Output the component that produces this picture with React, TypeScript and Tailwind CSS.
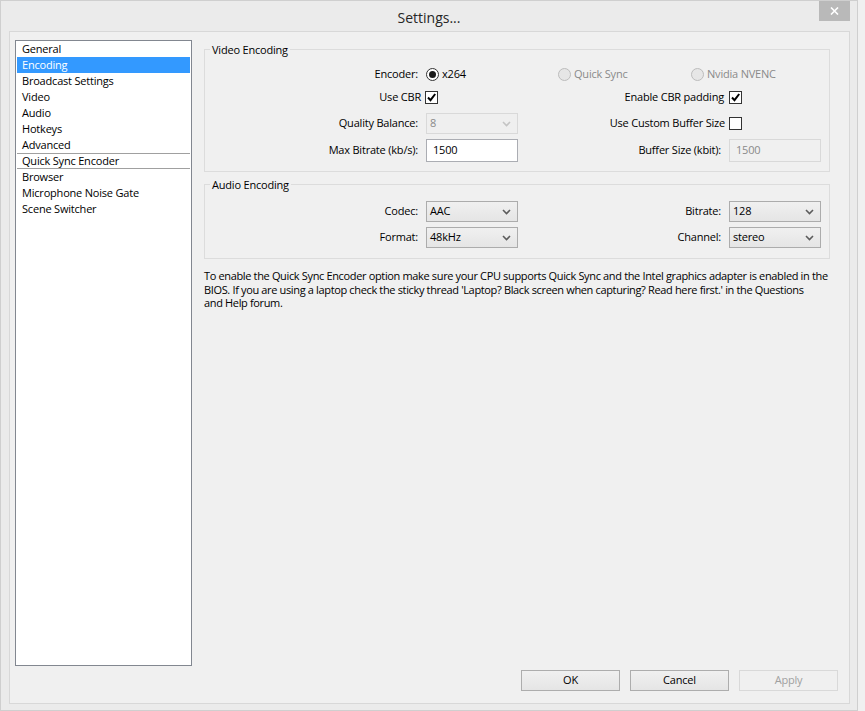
import type { ReactNode } from "react";

const sidebarGroups = [
  ["General", "Encoding", "Broadcast Settings", "Video", "Audio", "Hotkeys", "Advanced"],
  ["Quick Sync Encoder"],
  ["Browser", "Microphone Noise Gate", "Scene Switcher"],
];

const Chevron = ({ disabled }: { disabled?: boolean }) => (
  <svg width="9" height="6" viewBox="0 0 9 6" className="shrink-0">
    <path
      d="M1 1l3.5 3.5L8 1"
      fill="none"
      stroke={disabled ? "#c4c4c4" : "#5c5c5c"}
      strokeWidth="1.6"
    />
  </svg>
);

const Radio = ({ label, checked, disabled }: { label: string; checked?: boolean; disabled?: boolean }) => (
  <div className="flex items-center gap-[3px]">
    <span
      className={`w-[13px] h-[13px] rounded-full border flex items-center justify-center ${
        disabled ? "border-[#bcbcbc] bg-[#e6e6e6]" : "border-[#333333] bg-white"
      }`}
    >
      {checked && <span className="w-[7px] h-[7px] rounded-full bg-[#1a1a1a]" />}
    </span>
    <span className={disabled ? "text-[#8a8a8a]" : "text-black"}>{label}</span>
  </div>
);

const Checkbox = ({ checked }: { checked?: boolean }) => (
  <span className="w-[13px] h-[13px] border border-[#333333] bg-white flex items-center justify-center shrink-0">
    {checked && (
      <svg width="11" height="11" viewBox="0 0 11 11">
        <path d="M2 5.5l2.5 2.7L9.2 2" fill="none" stroke="#000" strokeWidth="2" />
      </svg>
    )}
  </span>
);

const Combo = ({ value, disabled }: { value: string; disabled?: boolean }) => (
  <div
    className={`w-[92px] h-[21px] border flex items-center justify-between pl-[3px] pr-[6px] ${
      disabled
        ? "border-[#d9d9d9] bg-[#efefef] text-[#8a8a8a]"
        : "border-[#acacac] bg-gradient-to-b from-[#f0f0f0] to-[#e5e5e5] text-black"
    }`}
  >
    <span>{value}</span>
    <Chevron disabled={disabled} />
  </div>
);

const TextBox = ({ value, disabled }: { value: string; disabled?: boolean }) => (
  <div
    className={`w-[92px] h-[23px] border flex items-center pl-[6px] ${
      disabled ? "border-[#d9d9d9] bg-[#f0f0f0] text-[#8a8a8a]" : "border-[#abadb3] bg-white text-black"
    }`}
  >
    {value}
  </div>
);

const Button = ({ children, disabled }: { children: ReactNode; disabled?: boolean }) => (
  <div
    className={`w-[99px] h-[21px] border flex items-center justify-center ${
      disabled
        ? "border-[#d9d9d9] bg-[#f0f0f0] text-[#a0a0a0]"
        : "border-[#adadad] bg-gradient-to-b from-[#f0f0f0] to-[#e5e5e5] text-black"
    }`}
  >
    {children}
  </div>
);

const GroupBox = ({ title, children, className = "" }: { title: string; children: ReactNode; className?: string }) => (
  <fieldset className={`border border-[#dcdcdc] ${className}`}>
    <legend className="ml-[5px] px-[2px] leading-[15px]">{title}</legend>
    {children}
  </fieldset>
);

export default function App() {
  return (
    <div className="w-[865px] h-[711px] bg-[#f0f0f0] font-['Open_Sans',sans-serif] text-[11px] tracking-[-0.2px] text-black">
      <div className="w-[858px] h-[711px] border border-[#cfcfcf] bg-[#ebebeb]">
        {/* title bar */}
        <div className="relative h-[30px] flex items-center justify-center pt-[2px]">
          <span className="text-[14px] text-[#262626] tracking-normal">Settings...</span>
          <div className="absolute top-0 right-[7px] w-[31px] h-[20px] bg-[#b9b9b9] flex items-center justify-center">
            <svg width="9" height="8" viewBox="0 0 9 8">
              <path d="M1 0.5l7 7M8 0.5l-7 7" stroke="#fff" strokeWidth="1.6" />
            </svg>
          </div>
        </div>

        <div className="ml-[8px] w-[841px] h-[673px] border border-[#d8d8d8] bg-[#f0f0f0] flex flex-col">
          <div className="flex pt-[8px] pl-[5px]">
            {/* section list */}
            <div className="w-[177px] h-[626px] border border-[#828790] bg-white px-[1px]">
              {sidebarGroups.map((group, gi) => (
                <div key={gi} className={gi > 0 ? "border-t border-[#a0a0a0]" : ""}>
                  {group.map((item) => (
                    <div
                      key={item}
                      className={`pl-[5px] flex items-center ${
                        item === "Quick Sync Encoder" ? "h-[14px]" : "h-[16px]"
                      } ${item === "Encoding" ? "bg-[#3399ff] text-white" : ""}`}
                    >
                      {item}
                    </div>
                  ))}
                </div>
              ))}
            </div>

            <div className="ml-[12px] w-[626px] pt-[2px]">
              <GroupBox title="Video Encoding" className="pt-[9px] pb-[9px]">
                <div className="flex items-center h-[16px]">
                  <span className="w-[213px] text-right">Encoder:</span>
                  <div className="ml-[8px] w-[132px]">
                    <Radio label="x264" checked />
                  </div>
                  <div className="w-[133px]">
                    <Radio label="Quick Sync" disabled />
                  </div>
                  <Radio label="Nvidia NVENC" disabled />
                </div>

                <div className="flex items-center h-[16px] mt-[7px]">
                  <span className="w-[216px] text-right">Use CBR</span>
                  <span className="ml-[4px]">
                    <Checkbox checked />
                  </span>
                  <span className="w-[286px] text-right">Enable CBR padding</span>
                  <span className="ml-[5px]">
                    <Checkbox checked />
                  </span>
                </div>

                <div className="flex items-center h-[21px] mt-[8px]">
                  <span className="w-[213px] text-right">Quality Balance:</span>
                  <div className="ml-[8px]">
                    <Combo value="8" disabled />
                  </div>
                  <span className="w-[207px] text-right">Use Custom Buffer Size</span>
                  <span className="ml-[4px]">
                    <Checkbox />
                  </span>
                </div>

                <div className="flex items-center h-[23px] mt-[5px]">
                  <span className="w-[213px] text-right">Max Bitrate (kb/s):</span>
                  <div className="ml-[8px]">
                    <TextBox value="1500" />
                  </div>
                  <span className="w-[203px] text-right">Buffer Size (kbit):</span>
                  <div className="ml-[8px]">
                    <TextBox value="1500" disabled />
                  </div>
                </div>
              </GroupBox>

              <GroupBox title="Audio Encoding" className="mt-[5px] pt-[9px] pb-[10px]">
                <div className="flex items-center h-[21px]">
                  <span className="w-[213px] text-right">Codec:</span>
                  <div className="ml-[8px]">
                    <Combo value="AAC" />
                  </div>
                  <span className="w-[203px] text-right">Bitrate:</span>
                  <div className="ml-[8px]">
                    <Combo value="128" />
                  </div>
                </div>
                <div className="flex items-center h-[21px] mt-[5px]">
                  <span className="w-[213px] text-right">Format:</span>
                  <div className="ml-[8px]">
                    <Combo value="48kHz" />
                  </div>
                  <span className="w-[203px] text-right">Channel:</span>
                  <div className="ml-[8px]">
                    <Combo value="stereo" />
                  </div>
                </div>
              </GroupBox>

              <p className="mt-[10px] leading-[13.5px] tracking-[-0.35px]">
                To enable the Quick Sync Encoder option make sure your CPU supports Quick Sync and the Intel
                graphics adapter is enabled in the BIOS. If you are using a laptop check the sticky thread
                'Laptop? Black screen when capturing? Read here first.' in the Questions
                <br />
                and Help forum.
              </p>
            </div>
          </div>

          <div className="flex justify-end gap-[10px] pr-[11px] mt-[4px]">
            <Button>OK</Button>
            <Button>Cancel</Button>
            <Button disabled>Apply</Button>
          </div>
        </div>
      </div>
    </div>
  );
}
